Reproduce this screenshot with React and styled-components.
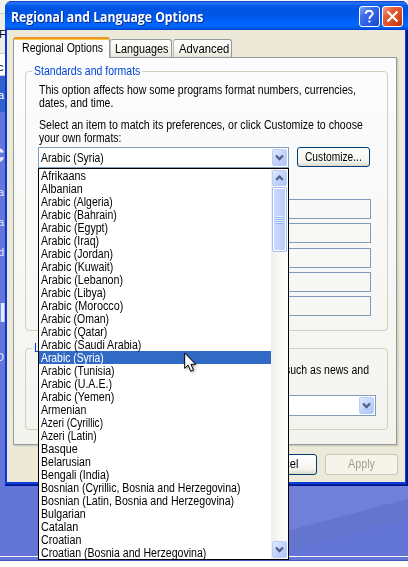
import React, { useLayoutEffect, useRef, useState } from "react";
import styled, { createGlobalStyle, css } from "styled-components";

const Global = createGlobalStyle`
  * { box-sizing: border-box; }
  html, body { margin: 0; padding: 0; overflow: hidden; background: #fff; }
  body { font: 12px/13px "Liberation Sans", Arial, sans-serif; color: #000; cursor: default; }
`;

/* ---------- text that is set to a given width ---------- */
const TextBox = styled.span`
  display: block;
  white-space: pre;
  width: ${(p) => p.$w}px;
`;
const TextRun = styled.span`
  display: inline-block;
  transform-origin: 0 50%;
`;
function Text({ w, children }) {
  const ref = useRef(null);
  const [scale, setScale] = useState(1);
  useLayoutEffect(() => {
    setScale(w / ref.current.offsetWidth);
  }, [w]);
  return (
    <TextBox $w={w}>
      <TextRun ref={ref} style={{ transform: `scaleX(${scale})` }}>{children}</TextRun>
    </TextBox>
  );
}

/* ---------- screen and desktop ---------- */
const Screen = styled.div`
  position: relative;
  display: grid;
  width: 408px;
  height: 567px;
  overflow: hidden;
  background: #fff;
  & > * { grid-area: 1 / 1; }
`;
const Desktop = styled.div`
  display: flex;
  flex-direction: column;
  height: 567px;
`;
const Pale = styled.div`
  height: ${(p) => p.$h}px;
  background: ${(p) => p.$bg || "#f3f2ea"};
  border-bottom: 1px solid #d0cdbd;
`;
const Band = styled.div`
  height: 36px;
  background: #2f62cb;
`;
const Wallpaper = styled.div`
  height: 444px;
  background: #6375d6;
`;
const Slope = styled.svg`
  display: block;
  width: 408px;
  height: 444px;
`;
const Ground = styled.div`
  height: 5px;
  background: linear-gradient(#fff 0 1px, #6375d6 1px 4px, #3f50b8 4px);
`;
const Strip = styled.div`
  width: 5px;
  height: 400px;
  overflow: hidden;
  display: flex;
  flex-direction: column;
  padding-top: 28px;
`;
const Clip = styled.span`
  height: ${(p) => p.$h}px;
  color: ${(p) => p.$c || "#e4e9fc"};
  font-size: ${(p) => p.$s || 11}px;
  font-weight: ${(p) => p.$b || 400};
  line-height: 13px;
  text-indent: ${(p) => p.$x || -2}px;
`;

/* ---------- dialog ---------- */
const Dialog = styled.section`
  width: 403px;
  height: 485px;
  margin: 1px 0 0 5px;
  display: flex;
  flex-direction: column;
  background: #0a3fdc;
  border-radius: 7px 7px 0 0;
  box-shadow: inset -1px 0 #00138c, inset 0 -1px #00138c, inset 1px 0 #0831d9, inset -2px 0 #001ea0, inset 0 -2px #001ea0;
`;
const TitleBar = styled.header`
  height: 29px;
  display: flex;
  align-items: center;
  padding: 2px 5px 0 6px;
  border-radius: 7px 7px 0 0;
  background: linear-gradient(#0a3bd0 0, #2c78f4 2px, #0a5ff0 4px, #0054e3 7px, #0055e8 14px, #0062fb 21px, #0066ff 25px, #005be9 27px, #003dd0 29px);
  color: #fff;
`;
const Title = styled.h1`
  flex: 1;
  margin: 0;
  font: 700 13.5px/18px "Open Sans", "Noto Sans", sans-serif;
  text-shadow: 1px 1px #0a2a8c;
`;
const TitleButton = styled.button`
  width: 21px;
  height: 21px;
  margin-left: 2px;
  padding: 0;
  border: 1px solid #fff;
  border-radius: 3px;
  background: ${(p) => p.$close
    ? "linear-gradient(135deg, #f0a28a 0, #e3613d 30%, #d8421a 75%, #b93409)"
    : "linear-gradient(135deg, #7ea3f5 0, #3a6ceb 35%, #2457de 75%, #1f45be)"};
`;
const Glyph = styled.svg`
  display: block;
  width: 19px;
  height: 19px;
`;
const Client = styled.div`
  width: 398px;
  height: 452px;
  margin-left: 2px;
  padding: 7px 0 0 6px;
  background: #ece9d8;
`;

/* ---------- tabs ---------- */
const Tabs = styled.nav`
  height: 20px;
  display: flex;
  align-items: flex-end;
`;
const Tab = styled.button`
  width: ${(p) => p.$w}px;
  height: 18px;
  padding: 2px 0 0 ${(p) => p.$pad}px;
  border: 1px solid #919b9c;
  border-bottom: 0;
  border-left-color: ${(p) => p.$first ? "#919b9c" : "#b9beb8"};
  border-radius: 3px 3px 0 0;
  background: linear-gradient(#fff, #f4f3ec 70%, #e5e3d8);
  font: inherit;
  text-align: left;
  color: #000;
  ${(p) => p.$active && css`
    height: 21px;
    margin-bottom: -1px;
    padding-top: 0;
    z-index: 1;
    background: #fcfcfe;
    border-top: 2px solid #e8952a;
    box-shadow: inset 0 1px #ffc73c;
  `}
`;
const Gap = styled.i`
  width: 1px;
`;
const Page = styled.div`
  width: 384px;
  height: 388px;
  padding: 13px 0 0 11px;
  border: 1px solid #919b9c;
  background: linear-gradient(#fcfcfe, #f4f3ee);
  box-shadow: 1px 1px #d0cebf, 2px 2px #e0dccb;
`;

/* ---------- groups and fields ---------- */
const Group = styled.fieldset`
  width: 363px;
  height: ${(p) => p.$h}px;
  margin: 0 0 17px;
  padding: 0 0 0 12px;
  border: 1px solid #d0d0bf;
  border-radius: 4px;
  min-width: 0;
`;
const Legend = styled.div`
  width: max-content;
  height: 13px;
  margin: -7px 0 0 -6px;
  padding: 0 2px;
  background: ${(p) => p.$bg};
  color: #0046d5;
`;
const Paragraph = styled.div`
  padding-left: 1px;
  margin-top: ${(p) => p.$top}px;
`;
const Line = styled.div`
  display: flex;
  gap: 8px;
  margin-top: 2px;
`;
const Select = styled.div`
  width: ${(p) => p.$w}px;
  height: 21px;
  display: flex;
  justify-content: space-between;
  padding: 1px 1px 1px 2px;
  line-height: 19px;
  border: 1px solid #7f9db9;
  background: #fff;
`;
const ArrowBox = styled.span`
  display: block;
  width: 15px;
  height: ${(p) => p.$h || 17}px;
  border: 1px solid #bccdf5;
  border-radius: 2px;
  background: linear-gradient(135deg, #e1eafe, #c3d3fd 50%, #afc6f6);
`;
const ArrowSvg = styled.svg`
  display: block;
  width: 13px;
  height: 100%;
`;
const PushButton = styled.button`
  width: 73px;
  height: ${(p) => p.$h || 21}px;
  display: flex;
  align-items: center;
  padding: 0 0 0 ${(p) => p.$pad}px;
  border: 1px solid #003c74;
  border-radius: 3px;
  background: linear-gradient(#fff, #f5f4ef 75%, #dcd7cb);
  font: inherit;
  color: #000;
  ${(p) => p.$off && css`
    color: #a1a192;
    background: #f5f4ea;
    border-color: #c9c7ba;
  `}
`;
const Samples = styled.div`
  width: 221px;
  display: flex;
  flex-direction: column;
  gap: 4px;
  margin: 31px 0 0 112px;
`;
const Sample = styled.div`
  height: 20px;
  margin-top: ${(p) => p.$shift || 0}px;
  border: 1px solid #7f9db9;
`;
const News = styled.div`
  margin: 9px 0 18px 247px;
`;
const Actions = styled.footer`
  display: flex;
  justify-content: flex-end;
  gap: 8px;
  width: 385px;
  margin-top: 9px;
`;

/* ---------- open list ---------- */
const Menu = styled.div`
  position: absolute;
  left: 38px;
  top: 168px;
  width: 251px;
  height: 392px;
  display: flex;
  border: 1px solid #000;
  background: #fff;
`;
const Items = styled.ul`
  flex: 1;
  margin: 0;
  padding: 0;
  list-style: none;
`;
const Item = styled.li`
  height: 13px;
  padding-left: 2px;
  line-height: 15px;
  ${(p) => p.$on && css`background: #316ac5; color: #fff;`}
`;
const Scroll = styled.div`
  width: 17px;
  display: flex;
  flex-direction: column;
  align-items: center;
  padding: 1px 0;
  background: linear-gradient(90deg, #f0eee6, #fcfcfa 70%, #fefefb);
`;
const Thumb = styled.div`
  width: 15px;
  height: 65px;
  margin: 1px 0 auto;
  display: flex;
  justify-content: center;
  align-items: center;
  border: 1px solid #a5bdf0;
  border-radius: 2px;
  background: linear-gradient(90deg, #cbd8fd, #c3d2fd 60%, #b4cafb);
  box-shadow: inset 0 0 0 1px #fff;
`;
const Grip = styled.i`
  width: 7px;
  height: 8px;
  background: repeating-linear-gradient(#eef4fe 0 1px, #8cb0f8 1px 2px);
`;
const Pointer = styled.svg`
  position: absolute;
  left: 184px;
  top: 352px;
  width: 13px;
  height: 21px;
  filter: drop-shadow(1px 1px 1px #0006);
`;

function Arrow({ up, ...rest }) {
  return (
    <ArrowBox {...rest}>
      <ArrowSvg viewBox="0 0 13 15">
        <path d={up ? "M3 9.5 6.5 6 10 9.5" : "M3 5.5 6.5 9 10 5.5"} fill="none" stroke="#4d6185" strokeWidth="2.3" />
      </ArrowSvg>
    </ArrowBox>
  );
}

const locales = [
  ["Afrikaans", 45], ["Albanian", 42], ["Arabic (Algeria)", 72], ["Arabic (Bahrain)", 76],
  ["Arabic (Egypt)", 67], ["Arabic (Iraq)", 58], ["Arabic (Jordan)", 72], ["Arabic (Kuwait)", 72],
  ["Arabic (Lebanon)", 82], ["Arabic (Libya)", 65], ["Arabic (Morocco)", 82], ["Arabic (Oman)", 68],
  ["Arabic (Qatar)", 66], ["Arabic (Saudi Arabia)", 100], ["Arabic (Syria)", 63], ["Arabic (Tunisia)", 74],
  ["Arabic (U.A.E.)", 71], ["Arabic (Yemen)", 73], ["Armenian", 45], ["Azeri (Cyrillic)", 62],
  ["Azeri (Latin)", 56], ["Basque", 37], ["Belarusian", 50], ["Bengali (India)", 68],
  ["Bosnian (Cyrillic, Bosnia and Herzegovina)", 199], ["Bosnian (Latin, Bosnia and Herzegovina)", 193],
  ["Bulgarian", 45], ["Catalan", 37], ["Croatian", 40], ["Croatian (Bosnia and Herzegovina)", 165],
];

export default function App() {
  return (
    <Screen>
      <Global />
      <Desktop>
        <Pale $h={14} />
        <Pale $h={40} $bg="#efeee5" />
        <Pale $h={22} $bg="#fff" />
        <Band />
        <Wallpaper>
          <Slope viewBox="0 112 408 444">
            <path d="M250 112H408V499L250 541Z" fill="#7080d8" />
            <path d="M250 541 408 499V517L250 563Z" fill="#6475cd" />
          </Slope>
        </Wallpaper>
        <Ground />
      </Desktop>
      <Strip>
        <Clip $h={33} $c="#000" $x={-1}>F</Clip>
        <Clip $h={28} $c="#000">c</Clip>
        <Clip $h={58} $c="#fff">a</Clip>
        <Clip $h={39} $s={26} $b={700} $x={-10}>c</Clip>
        <Clip $h={30}>a</Clip>
        <Clip $h={30}>a</Clip>
        <Clip $h={61}>d</Clip>
        <Clip $h={44} $s={26} $b={700} $x={-1}>l</Clip>
        <Clip $h={20} $x={-4}>D</Clip>
      </Strip>
      <Dialog>
        <TitleBar>
          <Title><Text w={192}>Regional and Language Options</Text></Title>
          <TitleButton aria-label="Help">
            <Glyph viewBox="0 0 19 19">
              <path d="M5.8 6.8C5.8 2.8 12.7 3 12.7 6.5 12.7 8.7 9.4 9 9.4 12M9.4 13.4v2.1" fill="none" stroke="#fff" strokeWidth="2" />
            </Glyph>
          </TitleButton>
          <TitleButton $close aria-label="Close">
            <Glyph viewBox="0 0 19 19">
              <path d="M4.5 4.5l10 10M14.5 4.5l-10 10" stroke="#fff" strokeWidth="2.2" />
            </Glyph>
          </TitleButton>
        </TitleBar>
        <Client>
          <Tabs>
            <Tab $w={97} $pad={8} $active $first><Text w={81}>Regional Options</Text></Tab>
            <Tab $w={62} $pad={4}><Text w={53}>Languages</Text></Tab>
            <Gap />
            <Tab $w={59} $pad={5}><Text w={50}>Advanced</Text></Tab>
          </Tabs>
          <Page>
            <Group $h={260}>
              <Legend $bg="#fbfbfd"><Text w={106}>Standards and formats</Text></Legend>
              <Paragraph $top={6}>
                <Text w={317}>This option affects how some programs format numbers, currencies,</Text>
                <Text w={74}>dates, and time.</Text>
              </Paragraph>
              <Paragraph $top={9}>
                <Text w={324}>Select an item to match its preferences, or click Customize to choose</Text>
                <Text w={82}>your own formats:</Text>
              </Paragraph>
              <Line>
                <Select $w={251}><Text w={63}>Arabic (Syria)</Text><Arrow /></Select>
                <PushButton $pad={7} $h={20}><Text w={57}>Customize...</Text></PushButton>
              </Line>
              <Samples>
                <Sample /><Sample /><Sample $shift={1} /><Sample /><Sample />
              </Samples>
            </Group>
            <Group $h={82}>
              <Legend $bg="#f4f3ee"><Text w={43}>Location</Text></Legend>
              <News><Text w={84}>such as news and</Text></News>
              <Select $w={338}><span /><Arrow /></Select>
            </Group>
          </Page>
          <Actions>
            <PushButton $pad={19}><Text w={34}>Cancel</Text></PushButton>
            <PushButton $pad={22} $off disabled><Text w={27}>Apply</Text></PushButton>
          </Actions>
        </Client>
      </Dialog>
      <Menu>
        <Items>
          {locales.map(([name, w], i) => (
            <Item key={name} $on={i === 14}><Text w={w}>{name}</Text></Item>
          ))}
        </Items>
        <Scroll>
          <Arrow up $h={16} />
          <Thumb><Grip /></Thumb>
          <Arrow $h={17} />
        </Scroll>
      </Menu>
      <Pointer viewBox="0 0 13 21">
        <path d="M.7 1v15.3l3.5-3.2 2.5 6.1 2.8-1.2-2.6-5.7h4.7Z" fill="#fff" stroke="#000" />
      </Pointer>
    </Screen>
  );
}
